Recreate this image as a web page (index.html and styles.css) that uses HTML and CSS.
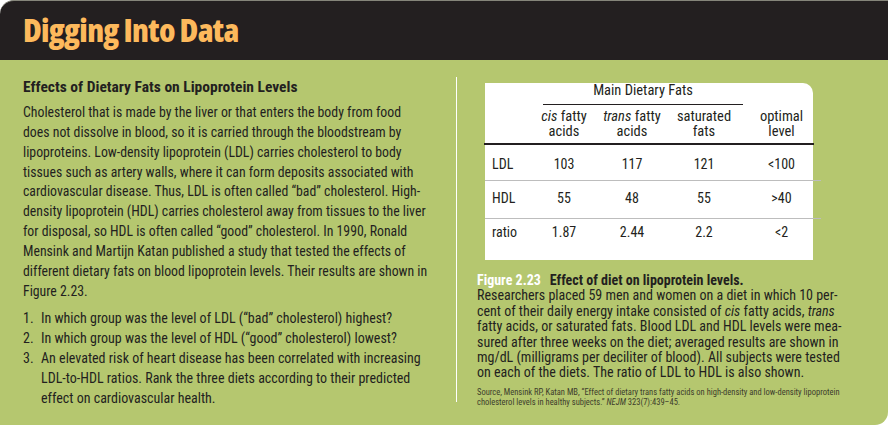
FILE: index.html
```html
<!DOCTYPE html>
<html lang="en">
<head>
<meta charset="utf-8">
<title>Digging Into Data</title>
<link rel="stylesheet" href="styles.css">
</head>
<body>
<div class="page">
  <header class="banner">
    <h1 class="title">Digging Into Data</h1>
  </header>
  <main class="panel">
    <section class="story">
      <h2 class="story-head">Effects of Dietary Fats on Lipoprotein Levels</h2>
      <p class="story-body">Cholesterol that is made by the liver or that enters the body from food<br>does not dissolve in blood, so it is carried through the bloodstream by<br>lipoproteins. Low-density lipoprotein (LDL) carries cholesterol to body<br>tissues such as artery walls, where it can form deposits associated with<br>cardiovascular disease. Thus, LDL is often called “bad” cholesterol. High-<br>density lipoprotein (HDL) carries cholesterol away from tissues to the liver<br>for disposal, so HDL is often called “good” cholesterol. In 1990, Ronald<br>Mensink and Martijn Katan published a study that tested the effects of<br>different dietary fats on blood lipoprotein levels. Their results are shown in<br>Figure 2.23.</p>
      <ol class="questions">
        <li><span class="num">1.</span><span>In which group was the level of LDL (“bad” cholesterol) highest?</span></li>
        <li><span class="num">2.</span><span>In which group was the level of HDL (“good” cholesterol) lowest?</span></li>
        <li><span class="num">3.</span><span>An elevated risk of heart disease has been correlated with increasing<br>LDL-to-HDL ratios. Rank the three diets according to their predicted<br>effect on cardiovascular health.</span></li>
      </ol>
    </section>
    <section class="figure">
      <div class="tbox">
        <div class="group">Main Dietary Fats</div>
        <div class="cols">
          <span class="c0"></span>
          <span class="c1"><i>cis</i> fatty<br>acids</span>
          <span class="c2"><i>trans</i> fatty<br>acids</span>
          <span class="c3">saturated<br>fats</span>
          <span class="c4">optimal<br>level</span>
        </div>
        <div class="row">
          <span class="c0">LDL</span><span class="c1">103</span><span class="c2">117</span><span class="c3">121</span><span class="c4">&lt;100</span>
        </div>
        <div class="row">
          <span class="c0">HDL</span><span class="c1">55</span><span class="c2">48</span><span class="c3">55</span><span class="c4">&gt;40</span>
        </div>
        <div class="row">
          <span class="c0">ratio</span><span class="c1">1.87</span><span class="c2">2.44</span><span class="c3">2.2</span><span class="c4">&lt;2</span>
        </div>
      </div>
      <p class="caption"><b class="fig">Figure 2.23</b><b class="cap-title">Effect of diet on lipoprotein levels.</b><br>Researchers placed 59 men and women on a diet in which 10 per-<br>cent of their daily energy intake consisted of <i>cis</i> fatty acids, <i>trans</i><br>fatty acids, or saturated fats. Blood LDL and HDL levels were mea-<br>sured after three weeks on the diet; averaged results are shown in<br>mg/dL (milligrams per deciliter of blood). All subjects were tested<br>on each of the diets. The ratio of LDL to HDL is also shown.</p>
      <p class="source">Source, Mensink RP, Katan MB, “Effect of dietary trans fatty acids on high-density and low-density lipoprotein<br>cholesterol levels in healthy subjects.” <i>NEJM</i> 323(7):439–45.</p>
    </section>
  </main>
</div>
</body>
</html>
```
FILE: styles.css
```css
* { box-sizing: border-box; }

html, body {
  margin: 0;
  padding: 0;
  background: #ffffff;
}

body {
  font-family: "Roboto", "DejaVu Sans Condensed", sans-serif;
  font-stretch: 75%;
  color: #231f20;
}

.page {
  width: 888px;
}

.banner {
  height: 60px;
  background: #231f20;
  border-top: 1px solid #85857a;
  border-top-left-radius: 14px;
  padding-left: 23px;
}

.title {
  margin: 0;
  padding-top: 13px;
  font-family: "Open Sans", sans-serif;
  font-stretch: 75%;
  font-weight: 800;
  font-size: 32px;
  line-height: 32px;
  letter-spacing: -0.7px;
  color: #fdb95c;
}

.panel {
  display: flex;
  align-items: flex-start;
  height: 365px;
  background: #b5c76f;
  border-bottom-right-radius: 13px;
}

.story {
  flex: 0 0 456px;
  padding: 17px 0 0 23px;
}

.story-head {
  margin: 0;
  font-size: 15.5px;
  font-stretch: 79%;
  line-height: 20px;
  font-weight: bold;
}

.story-body {
  margin: 6px 0 0;
  font-size: 13.8px;
  line-height: 19.85px;
  white-space: nowrap;
}

.questions {
  list-style: none;
  margin: 8px 0 0;
  padding: 0;
  font-size: 14px;
  line-height: 19.8px;
  white-space: nowrap;
}

.questions li {
  display: flex;
}

.questions .num {
  flex: 0 0 18px;
}

.figure {
  margin-top: 17px;
  height: 325px;
  border-left: 1px solid #ffffff;
  padding-left: 28px;
}

.tbox {
  width: 328px;
  height: 177px;
  background: #ffffff;
  border-top-right-radius: 10px;
  font-size: 14px;
}

.group {
  margin: 6px 0 0 58px;
  width: 200px;
  padding-bottom: 5px;
  text-align: center;
  font-size: 14.5px;
  line-height: 16px;
  border-bottom: 1px solid #231f20;
}

.cols,
.row {
  display: flex;
  line-height: 15px;
}

.cols {
  margin: 4px 0 0 -1px;
  width: 330px;
  padding: 0 0 4px 1px;
  border-bottom: 2px solid #231f20;
  font-size: 14.5px;
}

.c0 { flex: 0 0 45px; padding-left: 7px; }
.c1 { flex: 0 0 68px; text-align: center; }
.c2 { flex: 0 0 68px; text-align: center; }
.c3 { flex: 0 0 76px; text-align: center; }
.c4 { flex: 0 0 71px; text-align: center; padding-left: 8px; }

.row {
  width: 336px;
  line-height: 16px;
  border-bottom: 1px solid #bdbdbd;
}

.row:nth-child(3) { height: 36px; padding-top: 11px; }
.row:nth-child(4) { height: 38px; padding-top: 9px; }
.row:nth-child(5) { padding-top: 5px; border-bottom: none; }

.caption {
  margin: 13px 0 0 -8px;
  font-size: 14px;
  line-height: 15.4px;
  white-space: nowrap;
}

.fig {
  color: #ffffff;
  margin-right: 9px;
}

.source {
  margin: 6px 0 0 -8px;
  font-size: 8.5px;
  line-height: 10px;
  color: #3d3d2c;
  white-space: nowrap;
}
```
